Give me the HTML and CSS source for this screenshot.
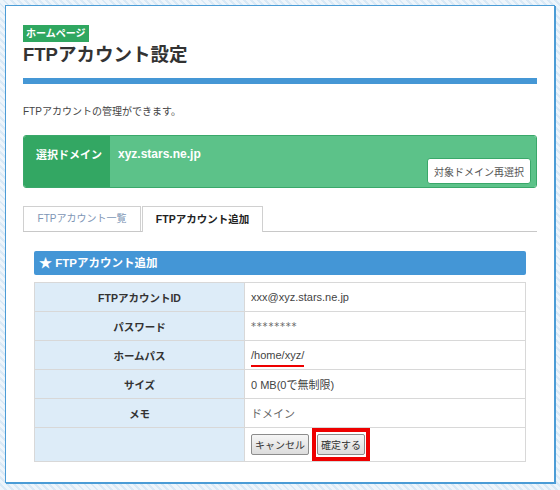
FILE: index.html
```html
<!DOCTYPE html>
<html lang="ja">
<head>
    <meta charset="UTF-8">
    <title>FTPアカウント設定</title>
    <link rel="stylesheet" href="styles.css">
</head>
<body>
    <div class="frame">
        <span class="badge">ホームページ</span>
        <h1 class="title">FTPアカウント設定</h1>
        <div class="title-bar"></div>

        <p class="desc">FTPアカウントの管理ができます。</p>

        <div class="domain-box">
            <div class="domain-label">選択ドメイン</div>
            <div class="domain-value">
                <span class="domain-name">xyz.stars.ne.jp</span>
                <button class="domain-btn">対象ドメイン再選択</button>
            </div>
        </div>

        <div class="tabs">
            <div class="tab">FTPアカウント一覧</div>
            <div class="tab active">FTPアカウント追加</div>
        </div>

        <div class="tab-body">
            <div class="section-head"><span class="star">&#9733;</span> FTPアカウント追加</div>
            <table class="form-table">
                <tr>
                    <th>FTPアカウントID</th>
                    <td>xxx@xyz.stars.ne.jp</td>
                </tr>
                <tr>
                    <th>パスワード</th>
                    <td class="pw">********</td>
                </tr>
                <tr>
                    <th>ホームパス</th>
                    <td><span class="marked">/home/xyz/</span></td>
                </tr>
                <tr>
                    <th>サイズ</th>
                    <td>0 MB(0で無制限)</td>
                </tr>
                <tr>
                    <th>メモ</th>
                    <td class="memo">ドメイン</td>
                </tr>
                <tr class="btn-row">
                    <th></th>
                    <td>
                        <button class="form-btn">キャンセル</button>
                        <span class="red-box"><button class="form-btn">確定する</button></span>
                    </td>
                </tr>
            </table>
        </div>
    </div>
</body>
</html>
```

FILE: styles.css
```css
body {
    margin: 0;
    font-family: "Liberation Sans", "Noto Sans CJK JP", sans-serif;
    color: #333;
    background: repeating-linear-gradient(45deg, #eef5fb 0, #eef5fb 3px, #d9e9f6 3px, #d9e9f6 5px);
    height: 490px;
    overflow: hidden;
}

.frame {
    margin: 5px 0 0 5px;
    width: 514px;
    height: 459px;
    padding: 17px 17px 0 17px;
    background: #fff;
    border: 1px solid #4b9cd6;
    box-shadow: 1px 1px 0 #4b9cd6;
}

.badge {
    display: inline-block;
    background: #2fa760;
    color: #fff;
    font-size: 10px;
    font-weight: bold;
    line-height: 17px;
    padding: 0 3px;
}

.title {
    margin: 2px 0 0;
    font-size: 18.5px;
    line-height: 22px;
    font-weight: bold;
    color: #333;
}

.title-bar {
    height: 6px;
    background: #4597d5;
    margin-top: 12px;
}

.desc {
    margin: 21px 0 0;
    font-size: 10px;
    line-height: 14px;
    color: #444;
}

.domain-box {
    display: flex;
    margin-top: 16px;
    height: 51px;
    border: 1px solid #3aa86a;
    border-radius: 3px;
    overflow: hidden;
}

.domain-label {
    width: 86px;
    background: #33a763;
    color: #fff;
    font-size: 11px;
    font-weight: bold;
    padding: 10px 0 0 12px;
    box-sizing: border-box;
}

.domain-value {
    flex: 1;
    background: #5cc289;
    position: relative;
    padding: 8px 0 0 8px;
}

.domain-name {
    color: #fff;
    font-size: 12px;
    font-weight: bold;
}

.domain-btn {
    position: absolute;
    right: 5px;
    bottom: 3px;
    width: 104px;
    height: 26px;
    background: #fff;
    border: 1px solid #3aa86a;
    border-radius: 3px;
    font-family: inherit;
    font-size: 10px;
    color: #555;
    padding: 0;
}

.tabs {
    display: flex;
    margin-top: 18px;
    border-bottom: 1px solid #c8c8c8;
    height: 25px;
}

.tab {
    width: 118px;
    box-sizing: border-box;
    border: 1px solid #d0d0d0;
    border-bottom: none;
    font-size: 10px;
    line-height: 24px;
    text-align: center;
    color: #7d95b5;
    background: #fff;
    margin-right: 1px;
}

.tab.active {
    width: 121px;
    color: #222;
    font-weight: bold;
    font-size: 10.5px;
    height: 26px;
}

.tab-body {
    padding: 19px 11px 0;
}

.section-head {
    height: 24px;
    line-height: 24px;
    background: #4496d6;
    color: #fff;
    font-size: 11.5px;
    font-weight: bold;
    padding-left: 5px;
    border-radius: 2px;
    margin-right: 0;
}

.star {
    font-size: 13px;
}

.form-table {
    margin-top: 7px;
    width: 100%;
    border-collapse: collapse;
    border: 1px solid #d8d8d8;
    font-size: 10.5px;
}

.form-table th,
.form-table td {
    border: 1px solid #d8d8d8;
    height: 28px;
    padding: 0;
}

.form-table th {
    width: 209px;
    background: #ddecf8;
    font-weight: bold;
    color: #333;
}

.form-table td {
    padding-left: 6px;
    color: #444;
    font-size: 11px;
}

.form-table .pw,
.form-table .memo {
    color: #666;
}

.form-table .pw {
    font-family: "DejaVu Sans", sans-serif;
    font-size: 10px;
    letter-spacing: 0.8px;
}

.marked {
    display: inline-block;
    border-bottom: 2px solid #e00;
    line-height: 14px;
    padding-bottom: 3px;
    margin-top: 4px;
}

.btn-row th,
.btn-row td {
    height: 33px;
}

.form-btn {
    font-family: inherit;
    font-size: 10px;
    color: #333;
    height: 21px;
    padding: 0 3px;
    background: linear-gradient(#f6f6f6, #dcdcdc);
    border: 1px solid #8c8c8c;
    border-radius: 2px;
    vertical-align: middle;
}

.red-box {
    display: inline-block;
    border: 4px solid #e00;
    padding: 2px 1px;
    vertical-align: middle;
}

.red-box .form-btn {
    display: block;
}
```
